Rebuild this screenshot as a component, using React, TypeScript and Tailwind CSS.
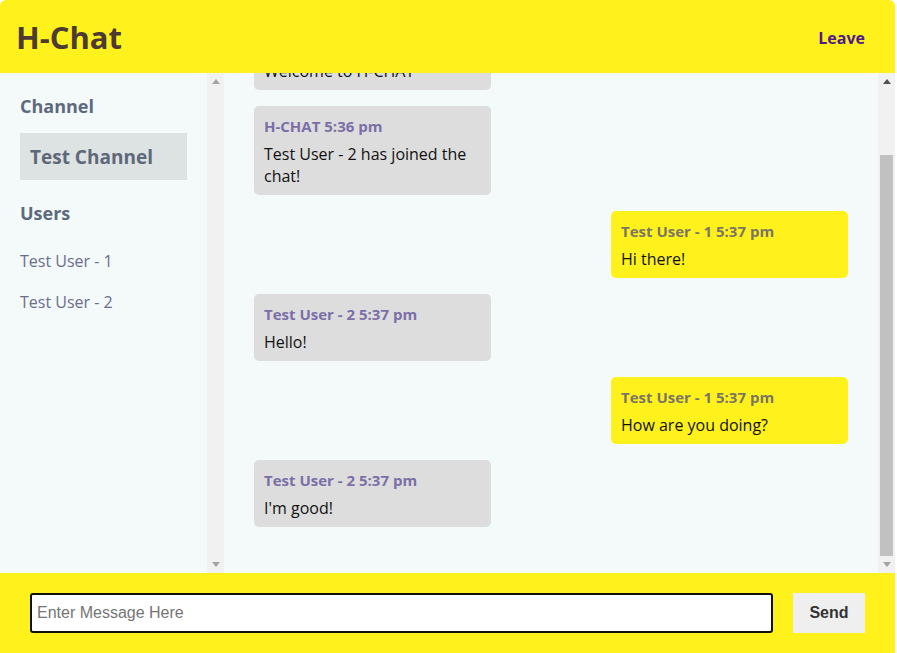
import React from 'react';

type Msg = { user: string; time: string; text: string; mine?: boolean };

const messages: Msg[] = [
  { user: 'H-CHAT', time: '5:36 pm', text: 'Welcome to H-CHAT' },
  { user: 'H-CHAT', time: '5:36 pm', text: 'Test User - 2 has joined the chat!' },
  { user: 'Test User - 1', time: '5:37 pm', text: 'Hi there!', mine: true },
  { user: 'Test User - 2', time: '5:37 pm', text: 'Hello!' },
  { user: 'Test User - 1', time: '5:37 pm', text: 'How are you doing?', mine: true },
  { user: 'Test User - 2', time: '5:37 pm', text: "I'm good!" },
];

const users = ['Test User - 1', 'Test User - 2'];

function Arrow({ up, dark }: { up?: boolean; dark?: boolean }) {
  return (
    <div className="flex h-[17px] items-center justify-center">
      <svg width="8" height="5" viewBox="0 0 8 5">
        <path d={up ? 'M0 5 L4 0 L8 5 Z' : 'M0 0 L4 5 L8 0 Z'} fill={dark ? '#505050' : '#a3a3a3'} />
      </svg>
    </div>
  );
}

// fake classic scrollbar, the screenshot has one next to both panes
function ScrollBar({ thumb }: { thumb?: number }) {
  return (
    <div className="flex w-[17px] shrink-0 flex-col bg-[#f1f1f1]">
      <Arrow up dark={!!thumb} />
      <div className="flex flex-1 flex-col justify-end px-[2px]">
        {thumb ? <div className="w-full bg-[#c1c1c1]" style={{ height: thumb }} /> : null}
      </div>
      <Arrow />
    </div>
  );
}

function Bubble({ msg }: { msg: Msg }) {
  return (
    <div className={`flex ${msg.mine ? 'justify-end' : 'justify-start'} mt-4 first:mt-0`}>
      <div
        className={`w-[237px] rounded-[5px] px-[10px] pt-[10px] pb-[8px] ${msg.mine ? 'bg-[#fff21c]' : 'bg-[#dddddd]'}`}
      >
        <div
          className={`mb-[7px] text-[15px] font-bold leading-5 ${msg.mine ? 'text-[#7b7565]' : 'text-[#7b6fa8]'}`}
        >
          {msg.user} {msg.time}
        </div>
        <div className="text-[16px] leading-[22px] text-[#111111]">{msg.text}</div>
      </div>
    </div>
  );
}

export default function App() {
  return (
    <div className="flex h-[653px] w-[895px] flex-col font-['Open_Sans',sans-serif]">
      <header className="flex h-[73px] shrink-0 items-center justify-between rounded-t-[6px] bg-[#fff21c] pl-4 pr-[30px] pt-[2px]">
        <h1 className="text-[31px] font-bold leading-none text-[#4c3a33]">H-Chat</h1>
        <a href="#" className="text-[16px] font-bold text-[#4e1a8c]">
          Leave
        </a>
      </header>

      <main className="flex min-h-0 flex-1 bg-[#f4f9fa]">
        <aside className="flex w-[224px] shrink-0">
          <div className="flex-1 pl-5 pr-5 pt-[21px]">
            <h3 className="text-[18px] font-bold leading-6 text-[#5c6a7e]">Channel</h3>
            <div className="mt-[15px] flex h-[47px] items-center bg-[#dde2e2] px-[10px] pt-[1px] text-[19px] font-bold text-[#5d6878]">
              Test Channel
            </div>
            <h3 className="mt-[21px] text-[18px] font-bold leading-6 text-[#5c6a7e]">Users</h3>
            <ul className="mt-6 flex flex-col gap-[17px]">
              {users.map((u) => (
                <li key={u} className="text-[16px] leading-6 text-[#6a6e8c]">
                  {u}
                </li>
              ))}
            </ul>
          </div>
          <ScrollBar />
        </aside>

        <section className="flex min-w-0 flex-1">
          <div className="flex flex-1 flex-col justify-end overflow-hidden px-[30px] pb-[46px]">
            {messages.map((m, i) => (
              <Bubble key={i} msg={m} />
            ))}
          </div>
          <ScrollBar thumb={401} />
        </section>
      </main>

      <footer className="flex h-[80px] shrink-0 items-center gap-5 bg-[#fff21c] px-[30px]">
        <input
          autoFocus
          placeholder="Enter Message Here"
          className="h-10 flex-1 rounded-[3px] border-2 border-[#111111] bg-white px-[5px] font-['Liberation_Sans',Arial,sans-serif] text-[16px] text-black caret-black outline-none placeholder:text-[#757575]"
        />
        <button className="h-10 w-[72px] bg-[#efefef] font-['Liberation_Sans',Arial,sans-serif] text-[16px] font-bold text-[#333333]">
          Send
        </button>
      </footer>
    </div>
  );
}
